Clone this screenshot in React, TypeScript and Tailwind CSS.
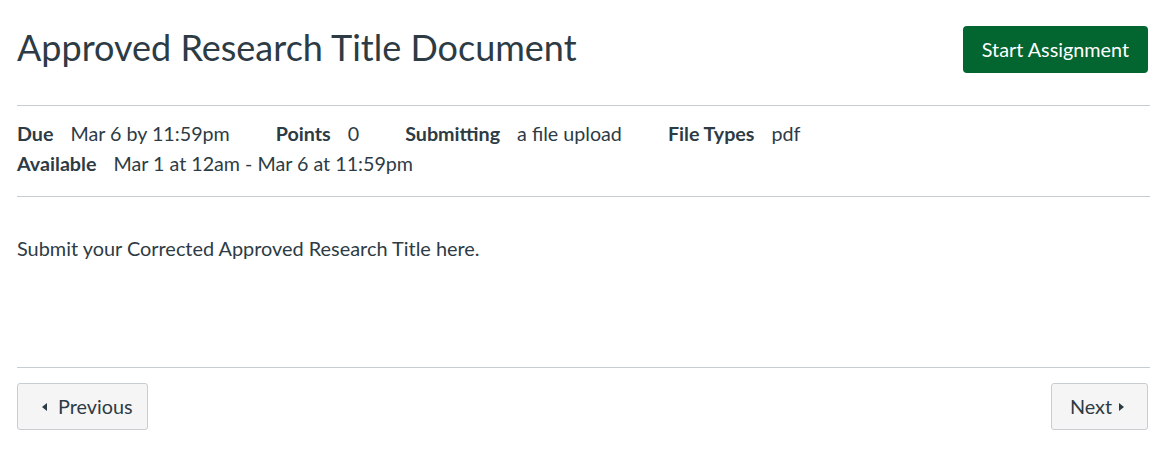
import React from 'react';

const MetaItem: React.FC<{ label: string; value: string }> = ({ label, value }) => (
  <span className="mr-[46px] whitespace-nowrap">
    <span className="font-bold mr-[17px]">{label}</span>
    <span>{value}</span>
  </span>
);

const Caret: React.FC<{ dir: 'left' | 'right' }> = ({ dir }) => (
  <svg width="5" height="8" viewBox="0 0 5 8" className="fill-current">
    {dir === 'left' ? <path d="M5 0v8L0 4z" /> : <path d="M0 0v8l5-4z" />}
  </svg>
);

export default function App() {
  return (
    <div
      className="bg-white text-[#2d3b45] px-[17px] w-[1165px] h-[475px]"
      style={{ fontFamily: 'Lato, "Liberation Sans", sans-serif' }}
    >
      <div className="flex items-start justify-between pt-[24px] pb-[32px] border-b border-[#c7cdd1] mr-[-2px]">
        <h1 className="text-[36px] leading-[46px] font-normal">Approved Research Title Document</h1>
        <button className="bg-[#03652f] text-white text-[19.8px] h-[47px] px-[19px] rounded-[4px] mr-[2px] mt-[2px]">
          Start Assignment
        </button>
      </div>

      <div className="text-[19.7px] leading-[30px] pt-[13px] pb-[17px] border-b border-[#c7cdd1] mr-[-2px]">
        <div>
          <MetaItem label="Due" value="Mar 6 by 11:59pm" />
          <MetaItem label="Points" value="0" />
          <MetaItem label="Submitting" value="a file upload" />
          <MetaItem label="File Types" value="pdf" />
        </div>
        <div>
          <MetaItem label="Available" value="Mar 1 at 12am - Mar 6 at 11:59pm" />
        </div>
      </div>

      <div className="text-[19.9px] leading-[28px] pt-[37px] h-[171px] border-b border-[#c7cdd1] mr-[-2px]">
        Submit your Corrected Approved Research Title here.
      </div>

      <div className="flex justify-between pt-[15px]">
        <button className="flex items-center gap-[11px] h-[47px] pl-[24px] pr-[15px] text-[19.8px] bg-[#f5f5f5] border border-[#c7cdd1] rounded-[3px]">
          <Caret dir="left" />
          Previous
        </button>
        <button className="flex items-center gap-[7px] h-[47px] pl-[18px] pr-[23px] text-[19.8px] bg-[#f5f5f5] border border-[#c7cdd1] rounded-[3px]">
          Next
          <Caret dir="right" />
        </button>
      </div>
    </div>
  );
}
